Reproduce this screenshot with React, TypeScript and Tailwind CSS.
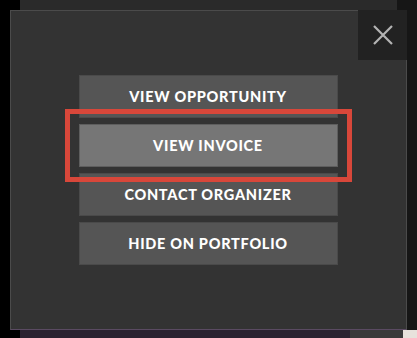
import React from "react";

const actions = [
	{ label: "VIEW OPPORTUNITY", active: false },
	{ label: "VIEW INVOICE", active: true },
	{ label: "CONTACT ORGANIZER", active: false },
	{ label: "HIDE ON PORTFOLIO", active: false },
];

const ActionButton: React.FC<{ label: string; active: boolean }> = ({ label, active }) => (
	<button
		className={
			active
				? "w-[259px] h-[43px] bg-[#767676] border border-[#5e5e5e] text-white text-[14.5px] font-black tracking-[0.05em]"
				: "w-[259px] h-[43px] bg-[#555555] border border-[#4a4a4a] text-white text-[14.5px] font-black tracking-[0.05em]"
		}
	>
		{label}
	</button>
);

export default function App() {
	return (
		<div className="relative w-[417px] h-[338px] overflow-hidden bg-[#161616] font-['Lato','Liberation_Sans',sans-serif]">
			{/* page behind the modal */}
			<div className="absolute left-0 top-0 w-[20px] h-full bg-black" />
			<div className="absolute left-[20px] top-0 w-[377px] h-[10px] bg-[#2a2a2a]" />
			<div className="absolute left-[20px] bottom-0 w-[330px] h-[8px] bg-[#2a2330]" />
			<div className="absolute left-[350px] bottom-0 w-[53px] h-[8px] bg-[#3a3a3a]" />
			<div className="absolute right-0 bottom-0 w-[14px] h-[8px] bg-[#e8e2dc]" />

			<div className="relative ml-[10px] mt-[10px] w-[397px] h-[320px] bg-[#333333] border border-[#4b4b4b] border-b-[#5a4a62] flex flex-col">
				<div className="flex justify-end">
					<button className="w-[49px] h-[50px] bg-[#222222] flex items-center justify-center -mt-px -mr-px">
						<svg width="22" height="22" viewBox="0 0 22 22" fill="none" stroke="#b4b4b4" strokeWidth="2.2">
							<path d="M2 2L20 20M20 2L2 20" />
						</svg>
					</button>
				</div>
				<div className="flex flex-col items-center gap-[6px] mt-[15px] -ml-px">
					{actions.map((a) =>
						a.active ? (
							<div key={a.label} className="border-[5px] border-[#d8473a] px-[9px] py-[10px] -my-[15px] z-10 relative">
								<ActionButton label={a.label} active />
							</div>
						) : (
							<ActionButton key={a.label} label={a.label} active={false} />
						),
					)}
				</div>
			</div>
		</div>
	);
}
